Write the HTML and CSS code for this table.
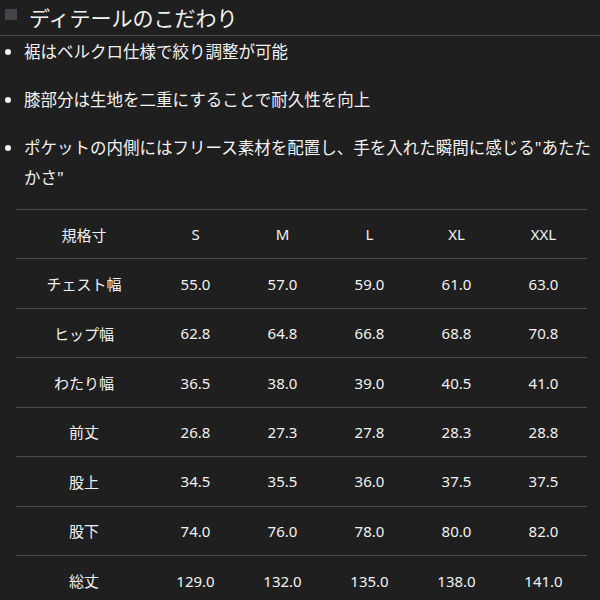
FILE: index.html
```html
<!DOCTYPE html>
<html lang="ja">
<head>
<meta charset="utf-8">
<link rel="stylesheet" href="styles.css">
</head>
<body>
<div class="page">
  <h2 class="title"><span class="mark"></span>ディテールのこだわり</h2>
  <ul class="points">
    <li>裾はベルクロ仕様で絞り調整が可能</li>
    <li>膝部分は生地を二重にすることで耐久性を向上</li>
    <li>ポケットの内側にはフリース素材を配置し、手を入れた瞬間に感じる"あたたかさ"</li>
  </ul>
  <table class="sizes">
    <tr><td>規格寸</td><td>S</td><td>M</td><td>L</td><td>XL</td><td>XXL</td></tr>
    <tr><td>チェスト幅</td><td>55.0</td><td>57.0</td><td>59.0</td><td>61.0</td><td>63.0</td></tr>
    <tr><td>ヒップ幅</td><td>62.8</td><td>64.8</td><td>66.8</td><td>68.8</td><td>70.8</td></tr>
    <tr><td>わたり幅</td><td>36.5</td><td>38.0</td><td>39.0</td><td>40.5</td><td>41.0</td></tr>
    <tr><td>前丈</td><td>26.8</td><td>27.3</td><td>27.8</td><td>28.3</td><td>28.8</td></tr>
    <tr><td>股上</td><td>34.5</td><td>35.5</td><td>36.0</td><td>37.5</td><td>37.5</td></tr>
    <tr><td>股下</td><td>74.0</td><td>76.0</td><td>78.0</td><td>80.0</td><td>82.0</td></tr>
    <tr><td>総丈</td><td>129.0</td><td>132.0</td><td>135.0</td><td>138.0</td><td>141.0</td></tr>
  </table>
</div>
</body>
</html>
```
FILE: styles.css
```css
html, body {
  margin: 0;
  padding: 0;
  background: #1f1f1f;
}
body {
  color: #f2f2f2;
  font-family: "Noto Sans", "Noto Sans CJK JP", sans-serif;
  overflow: hidden;
}
.page {
  width: 600px;
  height: 600px;
}
.title {
  margin: 0;
  height: 35px;
  border-bottom: 1px solid #4a4a4a;
  display: flex;
  align-items: center;
  gap: 12px;
  padding-left: 5px;
  font-size: 21px;
  font-weight: normal;
  line-height: 30px;
}
.mark {
  width: 12px;
  height: 11px;
  background: #46434b;
  margin-top: -6px;
}
.points {
  list-style: none;
  margin: 1px 0 0 0;
  padding: 0 8px 0 24px;
  font-size: 16.5px;
  line-height: 30px;
}
.points li {
  position: relative;
  margin-bottom: 18px;
}
.points li:last-child {
  margin-bottom: 16px;
}
.points li::before {
  content: "";
  position: absolute;
  left: -19px;
  top: 12px;
  width: 6px;
  height: 6px;
  border-radius: 50%;
  background: #f2f2f2;
}
.sizes {
  margin: 0 0 0 16px;
  width: 571px;
  border-collapse: collapse;
  font-size: 15px;
}
.sizes tr {
  height: 49.45px;
}
.sizes td {
  border-top: 1px solid #4a4a4a;
  text-align: center;
  padding: 0;
  width: 87px;
}
.sizes td:first-child {
  width: 136px;
}
```
